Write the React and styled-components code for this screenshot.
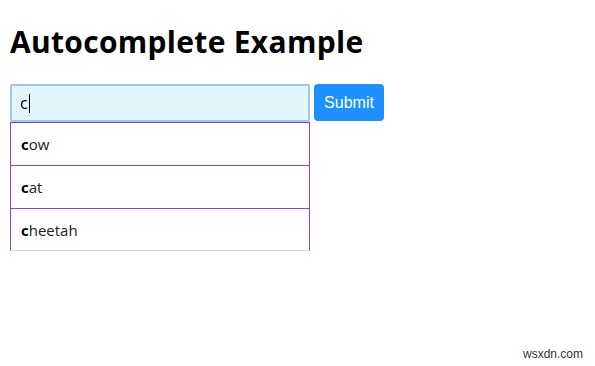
import React from "react";
import styled, { createGlobalStyle } from "styled-components";

const Global = createGlobalStyle`
  html, body { margin: 0; padding: 0; background: #fff; }
  body { font-family: "Open Sans", "Noto Sans", sans-serif; color: #000; }
  * { box-sizing: border-box; }
`;

const Page = styled.div`
  position: relative;
  width: 595px;
  height: 366px;
  padding: 0 10px;
  overflow: hidden;
`;

const Title = styled.h1`
  margin: 0;
  padding-top: 22px;
  font-size: 30px;
  font-weight: 700;
  line-height: 40px;
  letter-spacing: 0.3px;
`;

const Form = styled.form`
  display: flex;
  align-items: flex-start;
  gap: 4px;
  margin-top: 22px;
`;

const Field = styled.div`
  position: relative;
  width: 300px;
`;

const Input = styled.div`
  height: 38px;
  border: 2px solid #a3c6e2;
  border-radius: 2px;
  background: #e1f5fd;
  padding: 0 8px;
  display: flex;
  align-items: center;
  font-family: "Open Sans", sans-serif;
  font-size: 16px;
  color: #000;
`;

const Caret = styled.span`
  display: inline-block;
  width: 1px;
  height: 19px;
  background: #000;
  margin-left: 1px;
`;

const List = styled.div`
  width: 300px;
  border-left: 1px solid #8e44ad;
  border-right: 1px solid #8e44ad;
  border-bottom: 1px solid #d4d4d4;
`;

const Item = styled.div`
  border-top: 1px solid #8e44ad;
  padding: 10px 10px;
  height: ${(p) => (p.$last ? "42px" : "43px")};
  font-size: 15px;
  line-height: 22px;
  color: #222;
  strong { font-weight: 700; color: #000; }
`;

const Button = styled.button`
  width: 70px;
  height: 37px;
  border: none;
  border-radius: 4px;
  background: #1e90ff;
  color: #fff;
  font-family: "Liberation Sans", Arial, sans-serif;
  font-size: 16px;
  padding: 0;
  cursor: pointer;
`;

const Watermark = styled.div`
  position: absolute;
  right: 12px;
  bottom: 5px;
  font-family: "Liberation Sans", Arial, sans-serif;
  font-size: 12px;
  color: #333;
`;

const items = ["cow", "cat", "cheetah"];

export default function App() {
  return (
    <Page>
      <Global />
      <Title>Autocomplete Example</Title>
      <Form onSubmit={(e) => e.preventDefault()}>
        <Field>
          <Input>
            c<Caret />
          </Input>
          <List>
            {items.map((w, i) => (
              <Item key={w} $last={i === items.length - 1}>
                <strong>{w[0]}</strong>
                {w.slice(1)}
              </Item>
            ))}
          </List>
        </Field>
        <Button type="submit">Submit</Button>
      </Form>
      <Watermark>wsxdn.com</Watermark>
    </Page>
  );
}
